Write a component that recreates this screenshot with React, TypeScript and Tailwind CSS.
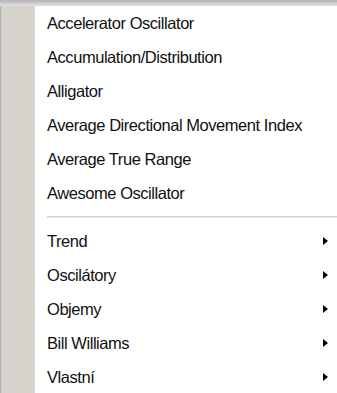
import React from "react";

const top = [
  "Accelerator Oscillator",
  "Accumulation/Distribution",
  "Alligator",
  "Average Directional Movement Index",
  "Average True Range",
  "Awesome Oscillator",
];
const sub = ["Trend", "Oscilátory", "Objemy", "Bill Williams", "Vlastní"];

export default function App() {
  return (
    <div
      className="w-[337px] h-[393px] overflow-hidden bg-white flex flex-col"
      style={{ fontFamily: '"Liberation Sans", Arial, sans-serif' }}
    >
      <div className="h-[6px] shrink-0 bg-gradient-to-b from-[#b2b2b2] to-[#e2e2e2]" />
      <div className="flex flex-1 min-h-0">
        <div className="w-[2px] shrink-0 bg-gradient-to-r from-[#b0b0b0] to-[#cfcfcf]" />
        <div className="w-[33px] shrink-0 bg-[#d6d3cd]" />
        <div className="flex-1 flex flex-col">
          {top.map((t) => (
            <div
              key={t}
              className="h-[34px] shrink-0 flex items-center pl-[12px] text-[16.5px] tracking-[-0.45px] text-[#111]"
            >
              {t}
            </div>
          ))}
          <div className="h-[14px] shrink-0 flex flex-col justify-center pl-[12px]">
            <div className="h-px bg-[#d2cec8]" />
            <div className="h-px bg-[#eeebe8]" />
          </div>
          {sub.map((t) => (
            <div
              key={t}
              className="h-[34px] shrink-0 flex items-center justify-between pl-[12px] pr-[9px] text-[16.5px] tracking-[-0.45px] text-[#111]"
            >
              <span>{t}</span>
              <span className="w-0 h-0 border-y-[4px] border-y-transparent border-l-[5px] border-l-black" />
            </div>
          ))}
        </div>
      </div>
    </div>
  );
}
